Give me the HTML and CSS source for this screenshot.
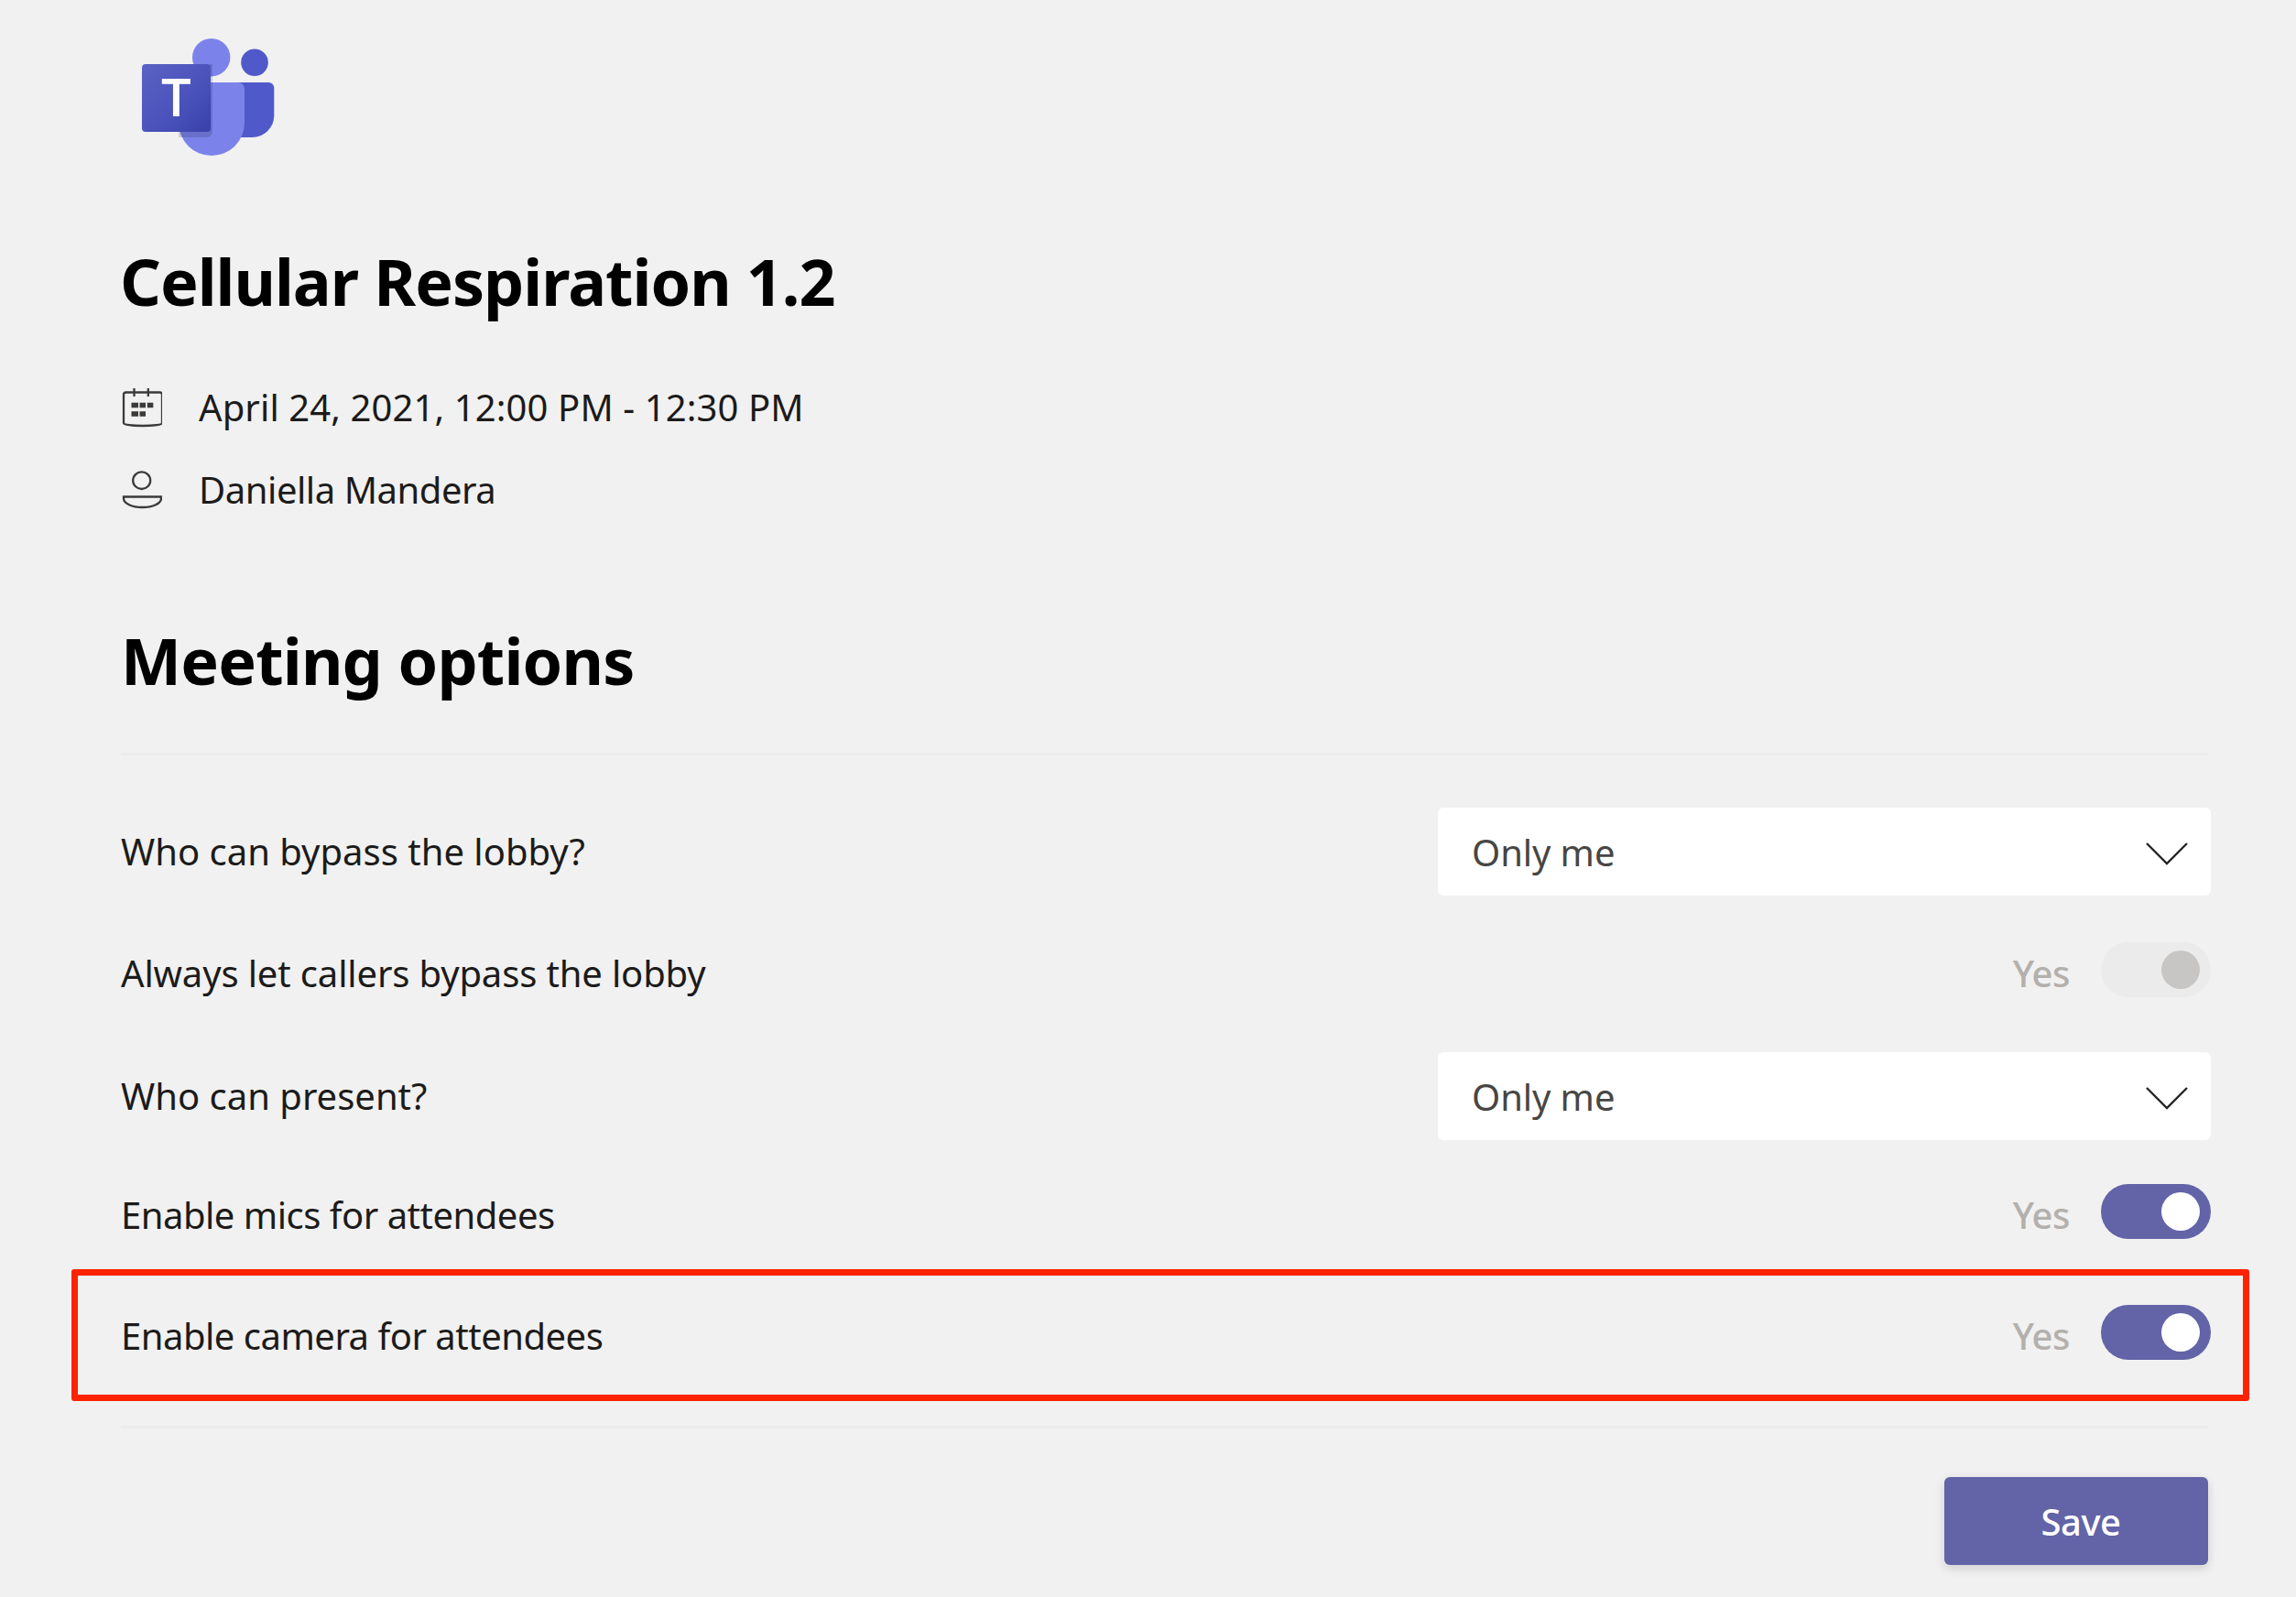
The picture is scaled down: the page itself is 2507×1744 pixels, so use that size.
FILE: index.html
```html
<!DOCTYPE html>
<html lang="en">
<head>
<meta charset="utf-8">
<title>Meeting options</title>
<link rel="stylesheet" href="styles.css">
</head>
<body>
<main class="page">
  <svg class="logo" viewBox="150 40 160 136" width="160" height="136" aria-label="Microsoft Teams">
    <defs>
      <linearGradient id="tile" x1="0" y1="0" x2="1" y2="1">
        <stop offset="0" stop-color="#5a62c3"/><stop offset="0.5" stop-color="#4d55bd"/><stop offset="1" stop-color="#3940ab"/>
      </linearGradient>
    </defs>
    <circle cx="278" cy="68.3" r="14.8" fill="#5059c9"/>
    <path d="M260 90h33.300a6 6 0 0 1 6 6v30a24 24 0 0 1-24 24h-15.300z" fill="#5059c9"/>
    <circle cx="230.700" cy="62.700" r="20.700" fill="#7b83eb"/>
    <path d="M195 90h65a7 7 0 0 1 7 7v37a36 36 0 0 1-72 0z" fill="#7b83eb"/>
    <path d="M195 90h34v-20h3v74a6 6 0 0 1-6 6h-31z" fill="#000" opacity=".14"/>
    <rect x="155" y="70" width="75" height="74" rx="4" fill="url(#tile)"/>
    <text class="logo-t" x="192.500" y="127" text-anchor="middle">T</text>
  </svg>

  <h1 class="title">Cellular Respiration 1.2</h1>

  <div class="meta">
    <svg class="meta-icon" viewBox="133 420 44 46" width="44" height="46" aria-hidden="true">
      <path d="M135 429a2.500 2.500 0 0 1 2.500-2.500h37a2.500 2.500 0 0 1 2.500 2.500v31c0 1.800-9 3-21 3s-21-1.200-21-3z" fill="none" stroke="#3b3a39" stroke-width="2.300"/>
      <path d="M146.500 422v9M161.800 422v9" fill="none" stroke="#3b3a39" stroke-width="2.300"/>
      <path d="M143.500 437.700h7.500v5.600h-7.500zM152.500 437.700h6.500v5.600h-6.500zM160.800 437.700h6.500v5.600h-6.500zM143.500 447.300h7.500v5.500h-7.500zM152.500 447.300h6.500v5.500h-6.500z" fill="#3b3a39"/>
    </svg>
    <span class="meta-text meta-date">April 24, 2021, 12:00 PM - 12:30 PM</span>
  </div>
  <div class="meta meta-second">
    <svg class="meta-icon" viewBox="133 514 44 46" width="44" height="46" aria-hidden="true">
      <ellipse cx="154.700" cy="526.700" rx="9.500" ry="9.300" fill="none" stroke="#3b3a39" stroke-width="2.300"/>
      <path d="M135 544.500h41v1.800c0 5.500-9 9.700-20.500 9.700s-20.500-4.200-20.500-9.700z" fill="none" stroke="#3b3a39" stroke-width="2.300"/>
    </svg>
    <span class="meta-text">Daniella Mandera</span>
  </div>

  <h2 class="heading">Meeting options</h2>
  <hr class="rule rule-top">

  <div class="row row-select">
    <span class="label label-wide">Who can bypass the lobby?</span>
    <div class="select"><span>Only me</span>
      <svg class="chevron" viewBox="0 0 46 26" width="46" height="26" aria-hidden="true"><path d="M1 1l22 22L45 1" fill="none" stroke="#252423" stroke-width="2.400"/></svg>
    </div>
  </div>

  <div class="row row-toggle row-lobby">
    <span class="label label-low label-tight">Always let callers bypass the lobby</span>
    <div class="toggle-wrap"><span class="yes">Yes</span><span class="toggle toggle-off"><span class="knob"></span></span></div>
  </div>

  <div class="row row-select row-present">
    <span class="label label-wide">Who can present?</span>
    <div class="select"><span>Only me</span>
      <svg class="chevron" viewBox="0 0 46 26" width="46" height="26" aria-hidden="true"><path d="M1 1l22 22L45 1" fill="none" stroke="#252423" stroke-width="2.400"/></svg>
    </div>
  </div>

  <div class="row row-toggle row-mics">
    <span class="label label-low">Enable mics for attendees</span>
    <div class="toggle-wrap"><span class="yes">Yes</span><span class="toggle"><span class="knob"></span></span></div>
  </div>

  <div class="row row-toggle row-camera">
    <span class="label label-low">Enable camera for attendees</span>
    <div class="toggle-wrap"><span class="yes">Yes</span><span class="toggle"><span class="knob"></span></span></div>
    <span class="highlight"></span>
  </div>

  <hr class="rule rule-bottom">

  <div class="actions"><button class="save" type="button">Save</button></div>
</main>
</body>
</html>
```
FILE: styles.css
```css
* { box-sizing: border-box; }
html, body { margin: 0; height: 100%; }
body {
  background: #f1f1f1;
  color: #252423;
  font-family: "Noto Sans", "Open Sans", "Liberation Sans", sans-serif;
  overflow: hidden;
}
.page { width: 2507px; height: 1744px; padding: 40px 93px 0 132px; }
.logo { display: block; margin-left: 18px; }
.logo-t { font-family: "Open Sans", sans-serif; font-weight: 600; font-size: 58px; fill: #fff; }
.title {
  margin: 84px 0 0 -1px;
  height: 94px;
  font-size: 70px;
  line-height: 94px;
  font-weight: 700;
  color: #000;
  letter-spacing: -1px;
}
.meta { display: flex; align-items: center; height: 46px; margin-top: 68px; }
.meta-second { margin-top: 44px; }
.meta-icon { flex: none; margin-left: 1px; margin-right: 40px; }
.meta-text { font-size: 40px; line-height: 46px; letter-spacing: -0.45px; color: #1c1b1a; }
.meta-date { letter-spacing: 0.1px; }
.heading {
  margin: 116px 0 0;
  height: 94px;
  font-size: 70px;
  line-height: 94px;
  font-weight: 700;
  color: #000;
  letter-spacing: -0.8px;
}
.rule { border: 0; height: 3px; margin: 0; background: #ebebeb; width: 2279px; }
.rule-top { margin-top: 54px; }
.rule-bottom { margin-top: 72px; }
.row { position: relative; display: flex; justify-content: space-between; align-items: center; width: 2282px; }
.row-select { height: 96px; margin-top: 57px; }
.row-toggle { height: 60px; }
.row-lobby { margin-top: 51px; }
.row-present { margin-top: 60px; }
.row-mics { margin-top: 48px; }
.row-camera { margin-top: 72px; }
.label { font-size: 40px; line-height: 54px; letter-spacing: -0.5px; color: #1c1b1a; }
.label-wide { letter-spacing: 0; }
.label-tight { letter-spacing: -0.15px; }
.label-low { position: relative; top: 4px; }
.select {
  display: flex;
  align-items: center;
  justify-content: space-between;
  width: 844px;
  height: 96px;
  padding: 0 25px 0 37px;
  background: #fff;
  border-radius: 6px;
  font-size: 40px;
  letter-spacing: -0.1px;
  color: #484644;
}
.chevron { display: block; margin-top: 6px; }
.toggle-wrap { display: flex; align-items: center; gap: 34px; }
.yes { position: relative; top: 4px; font-size: 40px; font-weight: 500; line-height: 54px; letter-spacing: -0.5px; color: #b3b0ad; }
.toggle {
  display: flex;
  align-items: center;
  justify-content: flex-end;
  width: 120px;
  height: 60px;
  padding-right: 12px;
  background: #6264a7;
  border-radius: 30px;
}
.toggle-off { background: #ebebeb; }
.knob { display: block; width: 42px; height: 42px; border-radius: 50%; background: #fff; }
.toggle-off .knob { background: #c8c6c4; }
.highlight {
  position: absolute;
  left: -54px;
  top: -39px;
  width: 2378px;
  height: 144px;
  border: 7px solid #ff2200;
  border-radius: 3px;
  pointer-events: none;
}
.actions { display: flex; justify-content: flex-end; width: 2279px; margin-top: 53px; }
.save {
  width: 288px;
  height: 96px;
  padding: 0 0 0 10px;
  border: 0;
  border-radius: 6px;
  background: #6264a7;
  color: #fff;
  font-family: inherit;
  font-size: 40px;
  font-weight: 500;
  letter-spacing: -0.5px;
  box-shadow: 0 4px 12px rgba(0,0,0,.14);
}
```
